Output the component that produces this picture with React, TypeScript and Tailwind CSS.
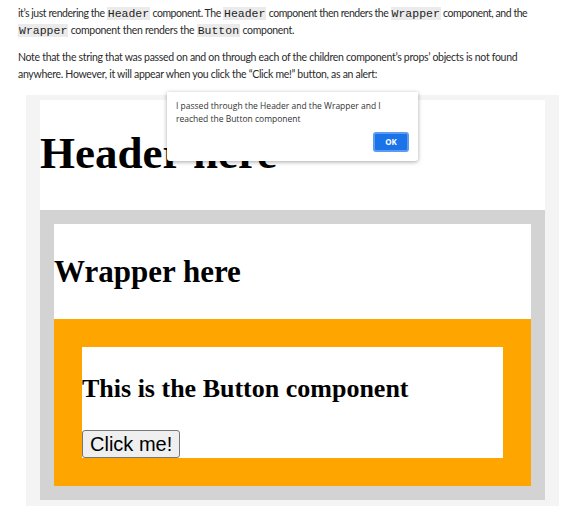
import React from "react";

const Code = ({ children }: { children: React.ReactNode }) => (
  <code className="bg-[#ebebeb] px-[1px] font-['Liberation_Mono',monospace] text-[11.5px] leading-none tracking-normal text-[#1e1e1e]">
    {children}
  </code>
);

export default function App() {
  return (
    <div className="relative h-[506px] w-[587px] overflow-hidden bg-white">
      <div className="pl-[18px] font-['Lato',sans-serif] text-[10.5px] leading-[17px] tracking-[-0.3px] text-[#2b2b2b]">
        <p className="mt-[5px] whitespace-nowrap">
          <span className="tracking-[-0.45px]">
            it’s just rendering the <Code>Header</Code> component. The <Code>Header</Code> component then renders the{" "}
            <Code>Wrapper</Code> component, and the
          </span>
          <br />
          <Code>Wrapper</Code> component then renders the <Code>Button</Code> component.
        </p>
        <p className="mt-[10px] whitespace-nowrap">
          Note that the string that was passed on and on through each of the children component’s props’ objects is not found
          <br />
          anywhere. However, it will appear when you click the “Click me!” button, as an alert:
        </p>
      </div>

      <div className="ml-[26px] mt-[12px] w-[533px] bg-[#f4f4f4] px-[14px] pt-[5px] pb-[6px]">
        <div className="h-[110px] bg-white pt-[31px]">
          <h1 className="font-['Liberation_Serif',serif] text-[45px] font-bold leading-[45px] text-black">Header here</h1>
        </div>
        <div className="bg-[#d3d3d3] p-[14px]">
          <div className="h-[95px] bg-white pt-[32px]">
            <h2 className="font-['Liberation_Serif',serif] text-[31px] font-bold leading-[31px] text-black">Wrapper here</h2>
          </div>
          <div className="bg-[#ffa500] p-[28px]">
            <div className="flex h-[111px] flex-col bg-white pt-[29px]">
              <h3 className="font-['Liberation_Serif',serif] text-[26px] font-bold leading-[26px] text-black">
                This is the Button component
              </h3>
              <div className="mt-auto">
                <button className="h-[28px] rounded-[3px] border border-[#767676] bg-[#efefef] px-[7px] font-['Liberation_Sans',Arial,sans-serif] text-[20px] leading-[20px] text-black">
                  Click me!
                </button>
              </div>
            </div>
          </div>
        </div>
      </div>

      <div className="absolute left-[167px] top-[92px] h-[69px] w-[251px] rounded-b-[3px] bg-white shadow-[0_1px_4px_rgba(0,0,0,0.35)]">
        <div className="px-[9px] pt-[7px] font-['Open_Sans',sans-serif] text-[8.5px] leading-[13px] text-[#333]">
          I passed through the Header and the Wrapper and I
          <br />
          reached the Button component
        </div>
        <div className="absolute left-[206px] top-[40px] flex h-[20px] w-[36px] items-center justify-center rounded-[3px] border-2 border-[#5e9bf0] bg-[#1a73e8] font-['Open_Sans',sans-serif] text-[8px] font-bold text-white">
          OK
        </div>
      </div>
    </div>
  );
}
